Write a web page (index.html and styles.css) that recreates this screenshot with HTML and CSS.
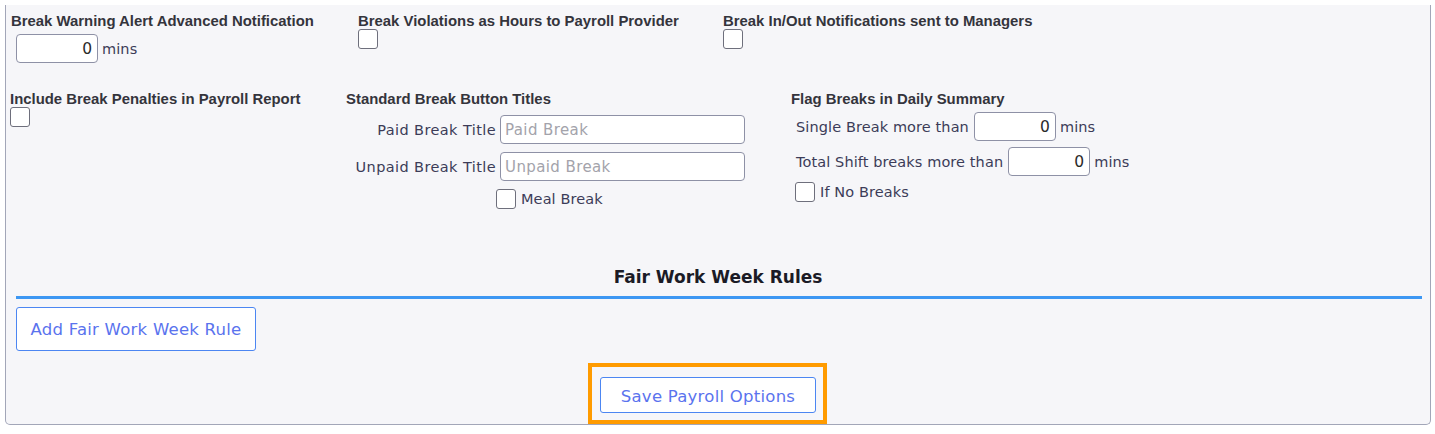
FILE: index.html
```html
<!DOCTYPE html>
<html>
<head>
<meta charset="utf-8">
<link rel="stylesheet" href="styles.css">
</head>
<body>
<div class="panel">
  <div class="row row1">
    <div class="field f1a">
      <div class="blabel">Break Warning Alert Advanced Notification</div>
      <div class="inline mt5"><input class="num w82" type="text" value="0"><span class="txt">mins</span></div>
    </div>
    <div class="field f1b">
      <div class="blabel">Break Violations as Hours to Payroll Provider</div>
      <input class="cb mtc ml5" type="checkbox">
    </div>
    <div class="field f1c">
      <div class="blabel">Break In/Out Notifications sent to Managers</div>
      <input class="cb mtc ml5" type="checkbox">
    </div>
  </div>

  <div class="row row2">
    <div class="field f2a">
      <div class="blabel">Include Break Penalties in Payroll Report</div>
      <input class="cb mtc ml6" type="checkbox">
    </div>
    <div class="field f2b">
      <div class="blabel">Standard Break Button Titles</div>
      <div class="titles">
        <label class="tlabel">Paid Break Title</label>
        <input class="textin" type="text" placeholder="Paid Break">
        <label class="tlabel">Unpaid Break Title</label>
        <input class="textin" type="text" placeholder="Unpaid Break">
        <span></span>
        <div class="inline meal"><input class="cb" type="checkbox"><span class="txt">Meal Break</span></div>
      </div>
    </div>
    <div class="field f2c">
      <div class="blabel">Flag Breaks in Daily Summary</div>
      <div class="inline flag1"><span class="txt tr">Single Break more than</span><input class="num w82" type="text" value="0"><span class="txt">mins</span></div>
      <div class="inline flag2"><span class="txt tr">Total Shift breaks more than</span><input class="num w82" type="text" value="0"><span class="txt">mins</span></div>
      <div class="inline flag3"><input class="cb" type="checkbox"><span class="txt">If No Breaks</span></div>
    </div>
  </div>

  <h2 class="section-title">Fair Work Week Rules</h2>
  <div class="rule-line"></div>
  <button class="btn add-btn">Add Fair Work Week Rule</button>

  <div class="save-row">
    <div class="highlight">
      <button class="btn save-btn">Save Payroll Options</button>
    </div>
  </div>
</div>
</body>
</html>
```

FILE: styles.css
```css
* { box-sizing: border-box; }
html, body { margin: 0; padding: 0; background: #ffffff; }
body { font-family: "DejaVu Sans", "Open Sans", sans-serif; }

.panel {
  margin: 5px 5px 0 5px;
  width: 1426px;
  height: 420px;
  background: #f6f6f9;
  border: 1px solid #a2a6b8;
  border-top: none;
  border-radius: 0 0 5px 5px;
  padding-top: 8px;
}

.row { display: flex; }
.row1 { height: 78px; }
.row2 { height: 174px; }

.field { display: flex; flex-direction: column; align-items: flex-start; }
.f1a { width: 352px; padding-left: 5px; }
.f1b { width: 365px; }
.f1c { width: 400px; }
.f2a { width: 340px; padding-left: 4px; }
.f2b { width: 445px; }
.f2c { width: 400px; }

.blabel {
  font-family: "Liberation Sans", Arial, sans-serif;
  font-weight: bold;
  font-size: 14.9px;
  line-height: 16px;
  color: #34343c;
  white-space: nowrap;
}

.inline { display: flex; align-items: center; }
.mt5 { margin-top: 5px; }
.mtc { margin-top: 4px; }
.ml5 { margin-left: 5px; }
.ml6 { margin-left: 6px; }

.txt {
  font-size: 14.5px;
  letter-spacing: 0.1px;
  color: #3c3c58;
  white-space: nowrap;
  line-height: 20px;
}

.num, .textin {
  height: 29px;
  border: 1px solid #8e91a6;
  border-radius: 4px;
  background: #ffffff;
  font-family: "DejaVu Sans", sans-serif;
  font-size: 15.5px;
  color: #2a2a2a;
  outline: none;
  margin: 0;
}
.num { text-align: right; padding: 0 5px 0 4px; margin-right: 4px; }
.w82 { width: 82px; }
.f1a .num { margin-left: 5px; }

.cb {
  -webkit-appearance: none;
  appearance: none;
  width: 20px;
  height: 20px;
  margin: 0;
  background: #ffffff;
  border: 1.5px solid #6e6f7c;
  border-radius: 3px;
  flex: none;
}
.cb + .txt { margin-left: 5px; }

.titles {
  display: grid;
  grid-template-columns: 150px 245px;
  column-gap: 4px;
  row-gap: 8px;
  margin-top: 8px;
  align-items: center;
}
.tlabel {
  font-size: 14.5px;
  letter-spacing: 0.4px;
  color: #3c3c58;
  text-align: right;
  white-space: nowrap;
}
.textin { width: 245px; padding: 0 4px; font-size: 15px; letter-spacing: 0.4px; }
.textin::placeholder { color: #a3a3ab; }
.titles .meal { margin-left: -4px; margin-top: 0; }

.flag1 { margin-top: 5px; margin-left: 5px; }
.flag1 .txt.tr, .flag2 .txt.tr { margin-right: 5px; }
.flag2 { margin-top: 6px; margin-left: 5px; }
.flag3 { margin-top: 6px; margin-left: 4px; }

.section-title {
  margin: 0;
  text-align: center;
  font-size: 17px;
  font-weight: bold;
  line-height: 24px;
  color: #1b1b26;
}

.rule-line {
  height: 3px;
  background: #3d97f3;
  margin: 7px 8px 0 10px;
}

.btn {
  font-family: "DejaVu Sans", sans-serif;
  background: #ffffff;
  border: 1px solid #4c86f2;
  border-radius: 3px;
  color: #5a73ee;
  cursor: pointer;
  margin: 0;
  letter-spacing: 0.25px;
}
.add-btn {
  display: block;
  margin: 8px 0 0 10px;
  width: 240px;
  height: 44px;
  font-size: 16.5px;
}

.save-row {
  display: flex;
  justify-content: center;
  padding-right: 21px;
  margin-top: 12px;
}
.highlight {
  border: 4px solid #ff9b00;
  padding: 10px 7px 7px 8px;
}
.save-btn {
  display: block;
  width: 216px;
  height: 36px;
  font-size: 16.5px;
  padding-top: 3px;
}
```
